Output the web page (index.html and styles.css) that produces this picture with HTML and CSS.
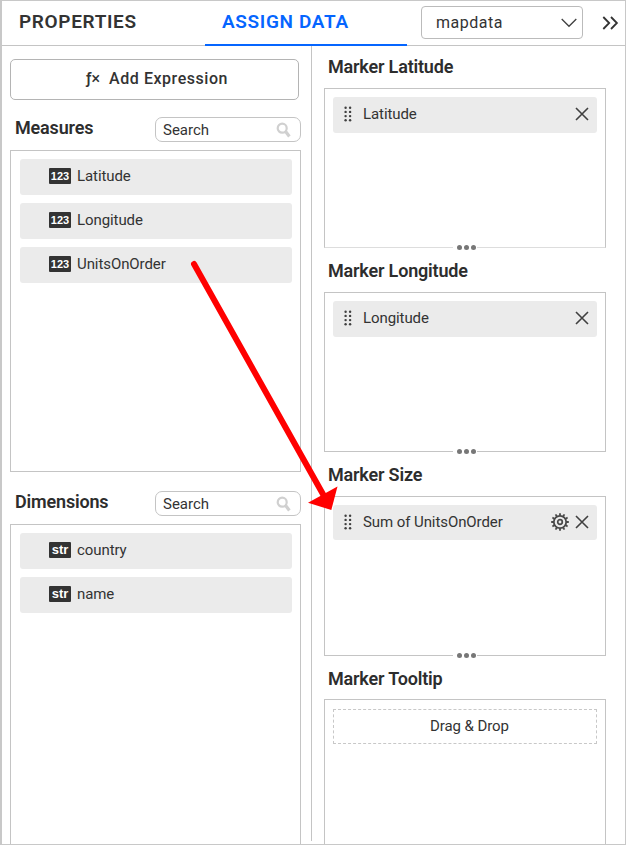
FILE: index.html
```html
<!DOCTYPE html>
<html lang="en">
<head>
<meta charset="utf-8">
<title>Assign Data</title>
<link rel="stylesheet" href="styles.css">
</head>
<body>
<svg class="defs" width="0" height="0" aria-hidden="true">
  <symbol id="close" viewBox="0 0 14 14"><path d="M1 1L13 13M13 1L1 13" fill="none" stroke="#404040" stroke-width="1.6"/></symbol>
  <symbol id="search" viewBox="0 0 16 16"><circle cx="6.2" cy="6.2" r="4.5" fill="none" stroke="#d0d0d0" stroke-width="2.2"/><path d="M9.6 9.6L13.4 14.4" stroke="#d0d0d0" stroke-width="3.2"/></symbol>
  <symbol id="grip" viewBox="0 0 8 16"><g fill="#404040"><circle cx="1.6" cy="1.7" r="1.2"/><circle cx="6.1" cy="1.7" r="1.2"/><circle cx="1.6" cy="5.9" r="1.2"/><circle cx="6.1" cy="5.9" r="1.2"/><circle cx="1.6" cy="10.1" r="1.2"/><circle cx="6.1" cy="10.1" r="1.2"/><circle cx="1.6" cy="14.3" r="1.2"/><circle cx="6.1" cy="14.3" r="1.2"/></g></symbol>
  <symbol id="gear" viewBox="0 0 18 18"><g fill="none" stroke="#484848"><circle cx="9" cy="9" r="6.2" stroke-width="1.8"/><circle cx="9" cy="9" r="2.3" stroke-width="1.7"/><path stroke-width="1.8" d="M9 .2V2.8M9 15.2V17.8M.2 9H2.8M15.2 9H17.8M4.6 1.4L5.9 3.6M13.4 1.4L12.1 3.6M1.4 4.6L3.6 5.9M16.6 4.6L14.4 5.9M1.4 13.4L3.6 12.1M16.6 13.4L14.4 12.1M4.6 16.6L5.9 14.4M13.4 16.6L12.1 14.4"/></g></symbol>
</svg>
<div class="window">
  <header class="header">
    <div class="tab">PROPERTIES</div>
    <div class="tab active">ASSIGN DATA</div>
    <div class="select"><span>mapdata</span><svg width="16" height="10" viewBox="0 0 16 10"><path d="M.7 1L8 8.3L15.3 1" fill="none" stroke="#404040" stroke-width="1.3"/></svg></div>
    <svg class="collapse" width="17" height="14" viewBox="0 0 17 14"><path d="M1.3 1L7.2 7L1.3 13M9 1L14.9 7L9 13" fill="none" stroke="#333" stroke-width="1.8"/></svg>
  </header>
  <main class="body">
    <section class="fields">
      <div class="expression"><span class="fx">ƒ×</span><span>Add Expression</span></div>
      <div class="group-head"><h2>Measures</h2><div class="search"><span>Search</span><svg width="16" height="16"><use href="#search"/></svg></div></div>
      <div class="list measures">
        <div class="field"><b class="type">123</b>Latitude</div>
        <div class="field"><b class="type">123</b>Longitude</div>
        <div class="field"><b class="type">123</b>UnitsOnOrder</div>
      </div>
      <div class="group-head second"><h2>Dimensions</h2><div class="search"><span>Search</span><svg width="16" height="16"><use href="#search"/></svg></div></div>
      <div class="list dimensions">
        <div class="field"><b class="type str">str</b>country</div>
        <div class="field"><b class="type str">str</b>name</div>
      </div>
    </section>
    <section class="targets">
      <h2>Marker Latitude</h2>
      <div class="drop light">
        <div class="chip"><svg width="8" height="16"><use href="#grip"/></svg><span>Latitude</span><svg width="14" height="14"><use href="#close"/></svg></div>
        <div class="handle"><i></i><i></i><i></i></div>
      </div>
      <h2>Marker Longitude</h2>
      <div class="drop">
        <div class="chip"><svg width="8" height="16"><use href="#grip"/></svg><span>Longitude</span><svg width="14" height="14"><use href="#close"/></svg></div>
        <div class="handle"><i></i><i></i><i></i></div>
      </div>
      <h2>Marker Size</h2>
      <div class="drop">
        <div class="chip short"><svg width="8" height="16"><use href="#grip"/></svg><span>Sum of UnitsOnOrder</span><svg class="gear" width="18" height="18"><use href="#gear"/></svg><svg width="14" height="14"><use href="#close"/></svg></div>
        <div class="handle"><i></i><i></i><i></i></div>
      </div>
      <h2 class="last-title">Marker Tooltip</h2>
      <div class="drop open"><div class="placeholder">Drag &amp; Drop</div></div>
    </section>
  </main>
  <svg class="arrow" width="626" height="845" viewBox="0 0 626 845"><path d="M194 264L324 496" stroke="#f00" stroke-width="6" stroke-linecap="round"/><path d="M308 502.7L331.3 510L337.5 486.5Z" fill="#f00"/></svg>
</div>
</body>
</html>
```
FILE: styles.css
```css
* { box-sizing: border-box; }
body { margin: 0; background: #fff; color: #333; font: 15px/20px Roboto, sans-serif; letter-spacing: -.08px; }
svg { display: block; flex: none; }
.defs { position: absolute; }
h2 { margin: 0; font-size: 18px; font-weight: 600; line-height: 24px; letter-spacing: -.18px; color: #2d2d2d; }
.window { position: relative; width: 626px; height: 845px; overflow: hidden; border: 1px solid #c8c8c8; border-left-width: 2px; display: flex; flex-direction: column; }
.header { height: 45px; flex: none; display: flex; border-bottom: 1px solid #c4c4c4; }
.tab { width: 203px; padding: 9px 0 0 17px; font-size: 19px; line-height: 24px; font-weight: 600; letter-spacing: .65px; white-space: nowrap; }
.tab.active { width: 202px; height: 45px; color: #0565ff; border-bottom: 2px solid #0565ff; }
.select { width: 162px; height: 33px; margin: 5px 0 0 14px; padding: 0 5px 0 14px; border: 1px solid #bbb; border-radius: 4px; display: flex; align-items: center; justify-content: space-between; font-size: 16px; }
.select span { letter-spacing: .5px; }
.select svg { margin-top: 1px; }
.collapse { margin: 15px 0 0 19px; }
.body { flex: 1; min-height: 0; display: flex; }
.fields { width: 310px; height: 795px; padding: 13px 10px 0 8px; border-right: 1px solid #c4c4c4; flex: none; display: flex; flex-direction: column; }
.expression { width: 289px; height: 41px; flex: none; border: 1px solid #b4b4b4; border-radius: 5px; display: flex; justify-content: center; gap: 9px; padding: 9px 0 0 5px; font-size: 16px; letter-spacing: .55px; font-weight: 500; }
.fx { letter-spacing: 0; }
.group-head { height: 50px; flex: none; padding: 17px 0 0 5px; display: flex; justify-content: space-between; }
.group-head h2 { margin-top: -1px; }
.group-head.second { height: 52px; padding-top: 19px; }
.search { width: 146px; height: 25px; border: 1px solid #c4c4c4; border-radius: 7px; padding: 0 8px 0 7px; display: flex; align-items: center; justify-content: space-between; letter-spacing: 0; }
.list { border: 1px solid #c4c4c4; padding: 8px 8px 0 9px; display: flex; flex-direction: column; gap: 8px; }
.measures { height: 322px; flex: none; }
.dimensions { height: 320px; flex: none; border-bottom: 0; }
.field { height: 36px; flex: none; background: #ebebeb; border-radius: 3px; padding: 0 0 2px 29px; display: flex; align-items: center; gap: 6px; }
.type { width: 22px; height: 16px; background: #333; color: #fff; border-radius: 1px; font: bold 11px/16px "Liberation Sans", sans-serif; letter-spacing: 0; text-align: center; }
.type.str { font-size: 13px; line-height: 15px; }
.targets { flex: 1; padding: 9px 19px 0 12px; }
.targets h2 { height: 33px; padding-left: 4px; }
.drop { position: relative; height: 160px; margin-bottom: 11px; border: 1px solid #c4c4c4; padding: 8px; }
.drop.light { border-bottom-color: #ddd; }
.targets .last-title { height: 32px; }
.chip { height: 36px; background: #ebebeb; border-radius: 3px; padding: 0 8px 2px 11px; display: flex; align-items: center; }
.chip span { flex: 1; margin: 0 0 0 11px; }
.chip.short { height: 35px; padding-bottom: 1px; }
.gear { margin-right: 6px; }
.handle { position: absolute; left: 128px; bottom: -4px; width: 24px; height: 7px; background: #fff; display: flex; align-items: center; justify-content: center; gap: 2px; padding-left: 2px; }
.handle i { width: 5px; height: 5px; border-radius: 50%; background: #777; flex: none; }
.open { height: 146px; padding-top: 9px; border-bottom: 0; margin: 0; }
.placeholder { height: 35px; border: 1px dashed #c8c8c8; text-align: center; padding: 6px 0 0 9px; }
.arrow { position: absolute; left: -2px; top: -1px; }
```
